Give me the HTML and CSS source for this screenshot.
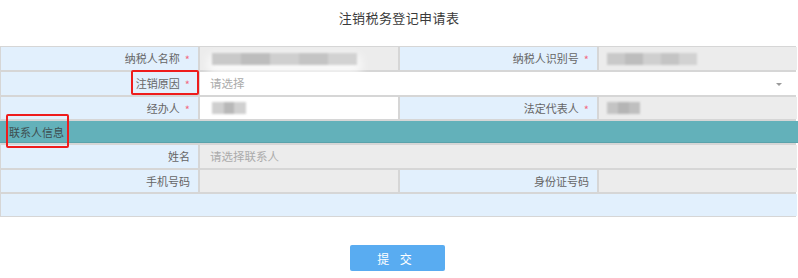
FILE: index.html
```html
<!DOCTYPE html>
<html lang="zh">
<head>
<meta charset="utf-8">
<link rel="stylesheet" href="styles.css">
</head>
<body>
<div class="page">
  <h1 class="title">注销税务登记申请表</h1>
  <div class="form">
    <div class="cell label">纳税人名称<span class="req">*</span></div>
    <div class="cell value grey"><span class="blur b1"></span></div>
    <div class="cell label">纳税人识别号<span class="req">*</span></div>
    <div class="cell value grey"><span class="blur b2"></span></div>

    <div class="cell label">注销原因<span class="req">*</span></div>
    <div class="cell value white span3 select"><span class="ph">请选择</span><span class="caret"></span></div>

    <div class="cell label">经办人<span class="req">*</span></div>
    <div class="cell value white"><span class="blur b3"></span></div>
    <div class="cell label">法定代表人<span class="req">*</span></div>
    <div class="cell value grey"><span class="blur b4"></span></div>

    <div class="section">联系人信息</div>

    <div class="cell label">姓名</div>
    <div class="cell value grey span3"><span class="ph">请选择联系人</span></div>

    <div class="cell label">手机号码</div>
    <div class="cell value grey"></div>
    <div class="cell label">身份证号码</div>
    <div class="cell value grey"></div>

    <div class="cell blank"></div>
  </div>
  <div class="actions">
    <button class="submit">提 交</button>
  </div>
  <div class="mark mark1"></div>
  <div class="mark mark2"></div>
</div>
</body>
</html>
```

FILE: styles.css
```css
* { box-sizing: border-box; }
html, body { margin: 0; padding: 0; background: #fff; }
body {
  font-family: "Noto Sans CJK SC", "Noto Sans", "Liberation Sans", sans-serif;
  color: #555;
}
.page { position: relative; width: 798px; height: 278px; }
.title {
  margin: 0;
  height: 46px;
  padding-top: 8px;
  text-align: center;
  font-size: 13px;
  font-weight: normal;
  letter-spacing: 0.4px;
  color: #3a3a3a;
  line-height: 20px;
}
.form {
  width: 796px;
  display: grid;
  grid-template-columns: 197px 198px 197px 198px;
  grid-template-rows: 23px 23px 22px 22px 23px 22px 22px;
  gap: 2px;
  padding: 1px 2px 1px 1px;
  background: #d6d6d6;
}
.cell {
  display: flex;
  align-items: center;
  font-size: 11px;
  line-height: 1;
}
.label {
  background: #e2f0fd;
  justify-content: flex-end;
  padding-right: 8px;
  color: #666;
}
.req { color: #f26a84; margin-left: 5px; font-size: 11px; position: relative; top: 1px; }
.value { padding-left: 10px; position: relative; }
.grey { background: #ececec; }
.white { background: #fff; }
.span3 { grid-column: span 3; }
.ph { color: #ababab; font-size: 11.5px; }
.select .caret {
  position: absolute;
  right: 15px;
  top: 11px;
  width: 0; height: 0;
  border-left: 3px solid transparent;
  border-right: 3px solid transparent;
  border-top: 3px solid #9a9a9a;
}
.section {
  grid-column: 1 / -1;
  margin: 0 -2px 0 -1px;
  background: #63b1ba;
  border-bottom: 1px solid #5aa2ab;
  display: flex;
  align-items: center;
  padding-left: 9px;
  font-size: 11px;
  color: #3e4d50;
}
.blank { grid-column: 1 / -1; background: #e2f0fd; }
.blur {
  display: block;
  height: 12px;
  filter: blur(1.2px);
  background: linear-gradient(90deg, #c9c9c9 0 20%, #bdbdbd 20% 40%, #cfcfcf 40% 60%, #c4c4c4 60% 80%, #d2d2d2 80% 100%);
}
.b1 { width: 145px; margin-left: 2px; box-shadow: 0 6px 10px 4px rgba(255,255,255,0.7); }
.b2 { width: 90px; margin-left: -2px; }
.b3 { width: 34px; margin-left: 2px; background: linear-gradient(90deg, #cfcfcf 0 35%, #b8b8b8 35% 65%, #d0d0d0 65%); }
.b4 { width: 33px; margin-left: -2px; background: linear-gradient(90deg, #c4c4c4 0 33%, #b5b5b5 33% 66%, #bfbfbf 66%); }
.actions {
  width: 796px;
  display: flex;
  justify-content: center;
  margin-top: 28px;
}
.submit {
  width: 95px;
  height: 26px;
  margin-left: -1px;
  border: none;
  border-radius: 2px;
  background: #59acf1;
  color: #fff;
  font-family: inherit;
  font-size: 12px;
  letter-spacing: 4px;
  padding-left: 4px;
}
.mark {
  position: absolute;
  border: 2px solid #ee1c1c;
  border-radius: 2px;
}
.mark1 { left: 131px; top: 70px; width: 68px; height: 25px; }
.mark2 { left: 6px; top: 114px; width: 63px; height: 34px; }
```
